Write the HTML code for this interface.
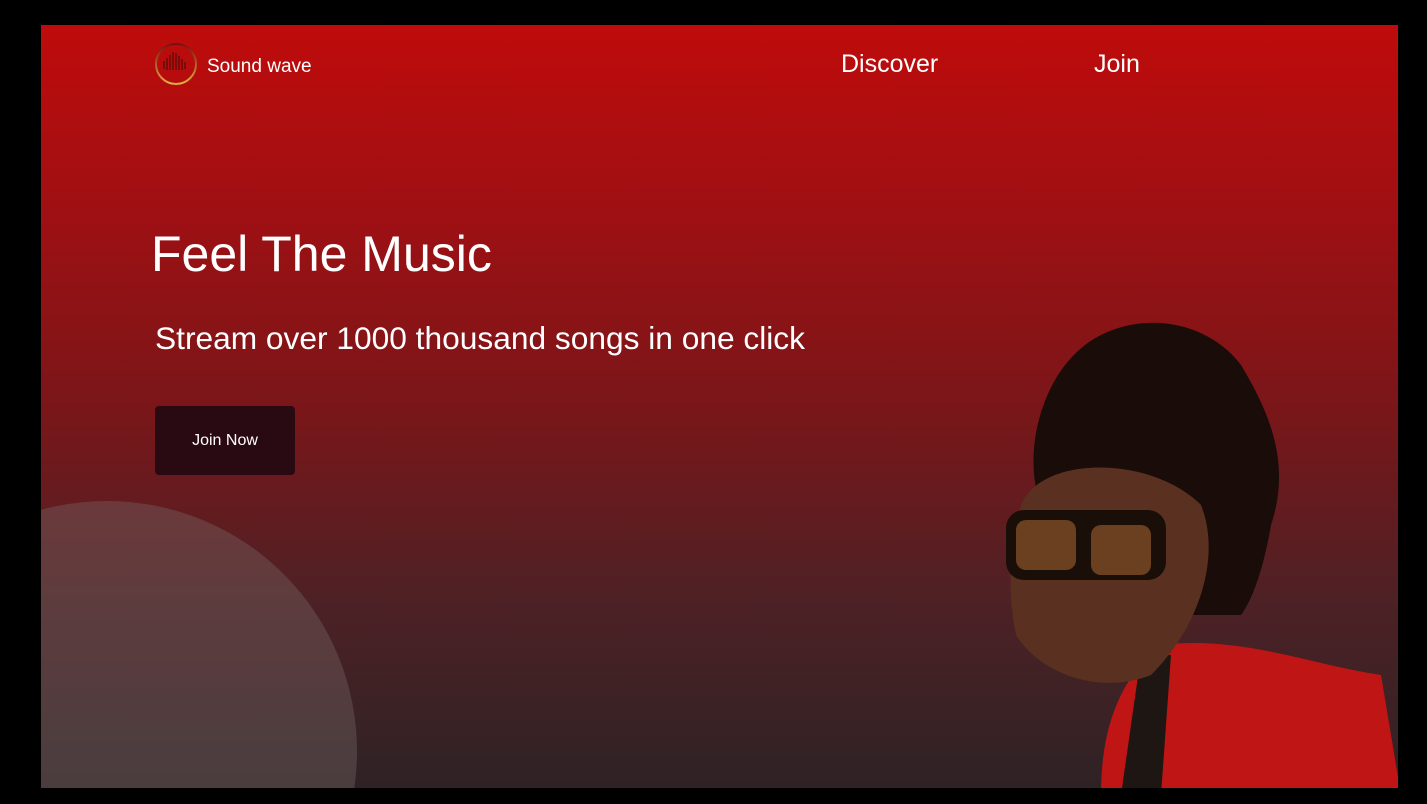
<!DOCTYPE html>
<html><head><style>
html,body{margin:0;width:1427px;height:804px;overflow:hidden}
body{background:#000;font-family:"Liberation Sans",sans-serif;position:relative}
.main{position:absolute;left:41px;top:25px;width:1357px;height:763px;overflow:hidden;background:linear-gradient(180deg,#bf0b0b 0%,#9e1013 25%,#7a1619 50%,#4e2125 75%,#2e2225 100%)}
.t{position:absolute;color:#fff;white-space:nowrap}
.circle{position:absolute;left:-184px;top:476px;width:500px;height:500px;border-radius:50%;background:rgba(120,105,105,.38)}
</style></head><body>
<div class="main">
<div class="circle"></div>
<svg style="position:absolute;left:113px;top:17px" width="44" height="44" viewBox="0 0 44 44">
<defs><linearGradient id="g" x1="0" y1="0" x2="0" y2="1"><stop offset="0" stop-color="#7a1010"/><stop offset="1" stop-color="#e0b040"/></linearGradient></defs>
<circle cx="22" cy="22" r="20" fill="none" stroke="url(#g)" stroke-width="2"/>
<g stroke="#5a0a0a" stroke-width="1.3"><line x1="10" y1="19" x2="10" y2="27"/><line x1="13" y1="16" x2="13" y2="28"/><line x1="16" y1="13" x2="16" y2="28"/><line x1="19" y1="10" x2="19" y2="28"/><line x1="22" y1="11" x2="22" y2="28"/><line x1="25" y1="14" x2="25" y2="28"/><line x1="28" y1="17" x2="28" y2="28"/><line x1="31" y1="20" x2="31" y2="27"/></g>
</svg>
<div class="t" style="left:166px;top:31px;font-size:19px">Sound wave</div>
<div class="t" style="left:800px;top:25px;font-size:25px">Discover</div>
<div class="t" style="left:1053px;top:25px;font-size:25px">Join</div>
<div class="t" style="left:110px;top:200px;font-size:50px">Feel The Music</div>
<div class="t" style="left:114px;top:295px;font-size:31.7px">Stream over 1000 thousand songs in one click</div>
<div style="position:absolute;left:114px;top:381px;width:140px;height:69px;background:#2a0a12;border-radius:4px;color:#fff;font-size:16px;line-height:69px;text-align:center">Join Now</div>
<svg style="position:absolute;left:960px;top:280px" width="400" height="490" viewBox="0 0 400 490">
<path d="M40 200 C20 150 40 60 100 30 C150 5 210 20 240 60 C270 110 290 160 270 220 C265 250 255 290 240 310 L150 310 Z" fill="#1a0c08"/>
<path d="M160 340 C240 330 310 360 380 370 L400 490 L100 490 C100 440 110 380 160 340 Z" fill="#c01515"/>
<path d="M140 350 L170 350 L160 490 L120 490 Z" fill="#1e1612"/>
<path d="M20 200 C40 150 150 150 200 200 C220 250 200 320 150 370 C100 390 40 370 15 330 C5 280 10 240 20 200 Z" fill="#5a3020"/>
<rect x="5" y="205" width="160" height="70" rx="18" fill="#1a0e08"/>
<rect x="15" y="215" width="60" height="50" rx="10" fill="#6a4020"/>
<rect x="90" y="220" width="60" height="50" rx="10" fill="#6a4020"/>
</svg>
</div>
</body></html>
